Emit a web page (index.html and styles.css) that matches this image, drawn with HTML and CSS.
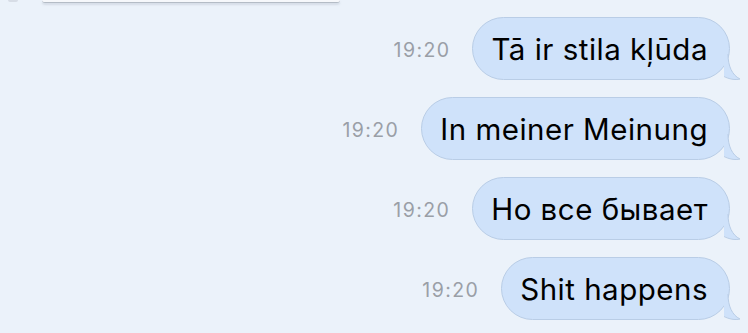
FILE: index.html
```html
<!DOCTYPE html>
<html>
<head>
<meta charset="utf-8">
<link rel="stylesheet" href="styles.css">
</head>
<body>
<div class="chat">
  <div class="prev-stub"><span class="avatar-stub"></span><span class="bubble-stub"></span></div>
  <div class="row">
    <span class="time">19:20</span>
    <div class="bubble">Tā ir stila kļūda<svg class="tail" viewBox="0 0 18 26" width="18" height="26"><path class="tail-fill" d="M0 0 H5 C5 12 9 21 17 25 C12 26.3 6 25 1 22 V0 Z"/><path class="tail-line" d="M5 0 C5 12 9 21 17 25 C12 26.3 6 25 1 22.5"/></svg></div>
  </div>
  <div class="row">
    <span class="time">19:20</span>
    <div class="bubble">In meiner Meinung<svg class="tail" viewBox="0 0 18 26" width="18" height="26"><path class="tail-fill" d="M0 0 H5 C5 12 9 21 17 25 C12 26.3 6 25 1 22 V0 Z"/><path class="tail-line" d="M5 0 C5 12 9 21 17 25 C12 26.3 6 25 1 22.5"/></svg></div>
  </div>
  <div class="row">
    <span class="time">19:20</span>
    <div class="bubble">Но все бывает<svg class="tail" viewBox="0 0 18 26" width="18" height="26"><path class="tail-fill" d="M0 0 H5 C5 12 9 21 17 25 C12 26.3 6 25 1 22 V0 Z"/><path class="tail-line" d="M5 0 C5 12 9 21 17 25 C12 26.3 6 25 1 22.5"/></svg></div>
  </div>
  <div class="row">
    <span class="time">19:20</span>
    <div class="bubble">Shit happens<svg class="tail" viewBox="0 0 18 26" width="18" height="26"><path class="tail-fill" d="M0 0 H5 C5 12 9 21 17 25 C12 26.3 6 25 1 22 V0 Z"/><path class="tail-line" d="M5 0 C5 12 9 21 17 25 C12 26.3 6 25 1 22.5"/></svg></div>
  </div>
</div>
</body>
</html>
```

FILE: styles.css
```css
html, body {
  margin: 0;
  padding: 0;
  background: #ebf2fa;
  width: 748px;
  height: 333px;
  overflow: hidden;
}
.chat {
  display: flex;
  flex-direction: column;
  gap: 17px;
  padding: 0 18px 0 0;
  font-family: Inter, "Noto Sans", "Liberation Sans", sans-serif;
}
.prev-stub {
  display: flex;
  align-items: flex-start;
  height: 0;
}
.avatar-stub {
  display: block;
  width: 10px;
  height: 2px;
  margin-left: 8px;
  background: #d7dde6;
  border-radius: 0 0 5px 5px;
}
.bubble-stub {
  display: block;
  width: 298px;
  height: 2px;
  margin-left: 24px;
  background: #f6f8fb;
  border-bottom: 1px solid #b4bcc6;
  border-radius: 0 0 8px 8px;
  box-shadow: 0 2px 2px rgba(150, 160, 175, 0.25);
}
.row {
  display: flex;
  justify-content: flex-end;
  align-items: center;
  gap: 22px;
}
.time {
  font-size: 19.5px;
  color: #9a9fa7;
  letter-spacing: 1.4px;
  padding-top: 2px;
}
.bubble {
  position: relative;
  box-sizing: border-box;
  height: 63px;
  display: flex;
  align-items: center;
  padding: 0 21px 0 18px;
  background: #cfe2fa;
  border: 1px solid #b9cde6;
  border-radius: 32px;
  font-size: 29.5px;
  color: #000;
  letter-spacing: 0.5px;
}
.tail {
  position: absolute;
  right: -12px;
  bottom: -1px;
  overflow: visible;
}
.tail-fill {
  fill: #cfe2fa;
}
.tail-line {
  fill: none;
  stroke: #b9cde6;
  stroke-width: 1;
}
```
